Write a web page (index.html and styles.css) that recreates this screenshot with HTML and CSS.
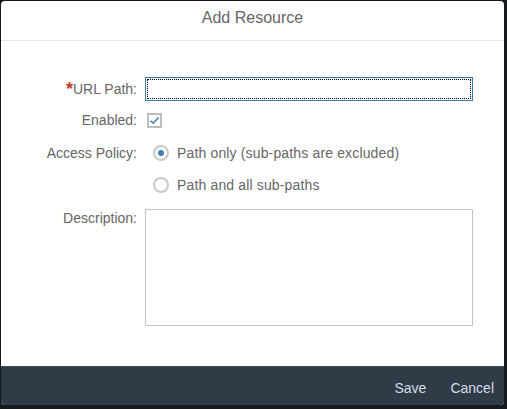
FILE: index.html
```html
<!DOCTYPE html>
<html>
<head>
<meta charset="utf-8">
<link rel="stylesheet" href="styles.css">
</head>
<body>
<div class="backdrop">
  <div class="dialog">
    <div class="dialog-header">Add Resource</div>
    <div class="dialog-body">
      <div class="row row-url">
        <label class="label"><span class="req">*</span>URL Path:</label>
        <div class="field"><div class="input focused"></div></div>
      </div>
      <div class="row row-enabled">
        <label class="label">Enabled:</label>
        <div class="field">
          <span class="checkbox">
            <svg width="11" height="9" viewBox="0 0 11 9"><path d="M1.5 4.8 L4.2 7.2 L9.5 1.5" fill="none" stroke="#3f7cb4" stroke-width="1.5"/></svg>
          </span>
        </div>
      </div>
      <div class="row row-policy">
        <label class="label">Access Policy:</label>
        <div class="field radios">
          <div class="radio-item"><span class="radio checked"></span><span class="radio-text">Path only (sub-paths are excluded)</span></div>
          <div class="radio-item"><span class="radio"></span><span class="radio-text">Path and all sub-paths</span></div>
        </div>
      </div>
      <div class="row row-desc">
        <label class="label">Description:</label>
        <div class="field"><div class="textarea"></div></div>
      </div>
    </div>
    <div class="dialog-footer">
      <button class="btn">Save</button>
      <button class="btn">Cancel</button>
    </div>
  </div>
</div>
</body>
</html>
```
FILE: styles.css
```css
html, body {
  margin: 0;
  padding: 0;
  background: #151a1f;
  width: 507px;
  height: 409px;
  overflow: hidden;
  font-family: "Liberation Sans", Arial, sans-serif;
}
.backdrop {
  padding: 1px 3px 4px 1px;
}
.dialog {
  width: 503px;
  height: 404px;
  background: #fff;
  border-radius: 4px;
  overflow: hidden;
  display: flex;
  flex-direction: column;
}
.dialog-header {
  height: 39px;
  border-bottom: 1px solid #e6e6e6;
  text-align: center;
  line-height: 34px;
  font-size: 16px;
  color: #666;
}
.dialog-body {
  flex: 1;
  padding-top: 36px;
}
.row {
  display: grid;
  grid-template-columns: 136px 328px;
  column-gap: 8px;
  font-size: 14px;
  color: #666;
}
.label {
  text-align: right;
  line-height: 24px;
}
.req {
  color: #c0392b;
  font-weight: bold;
  font-size: 18px;
  vertical-align: -1px;
}
.input {
  height: 22px;
  border: 1px solid #3c77b0;
  background: #fff;
}
.focused {
  outline: 1px dotted #000;
  outline-offset: -3px;
}
.row-enabled {
  margin-top: 7px;
}
.checkbox {
  display: flex;
  align-items: center;
  justify-content: center;
  width: 11px;
  height: 11px;
  border: 2px solid #bdbdbd;
  margin-top: 5px;
  margin-left: 2px;
}
.row-policy {
  margin-top: 9px;
}
.radios {
  display: flex;
  flex-direction: column;
  row-gap: 8px;
}
.radio-item {
  display: flex;
  align-items: center;
  height: 24px;
  padding-left: 8px;
}
.radio-text {
  letter-spacing: 0.15px;
}
.radio {
  box-sizing: border-box;
  width: 16px;
  height: 16px;
  border: 2px solid #c9c9c9;
  border-radius: 50%;
  display: flex;
  align-items: center;
  justify-content: center;
  margin-right: 8px;
}
.radio.checked::after {
  content: "";
  width: 6px;
  height: 6px;
  border-radius: 50%;
  background: #3f7cb4;
}
.row-desc {
  margin-top: 12px;
}
.row-desc .label {
  line-height: 19px;
}
.textarea {
  height: 115px;
  border: 1px solid #c3c3c3;
}
.dialog-footer {
  height: 38px;
  background: #2f3b47;
  border-top: 1px solid #3e4b58;
  display: flex;
  justify-content: flex-end;
  align-items: center;
  padding-right: 10px;
  column-gap: 24px;
}
.btn {
  background: none;
  border: none;
  padding: 0;
  font-family: inherit;
  font-size: 14px;
  color: #d4dde6;
  margin-top: 3px;
}
```
